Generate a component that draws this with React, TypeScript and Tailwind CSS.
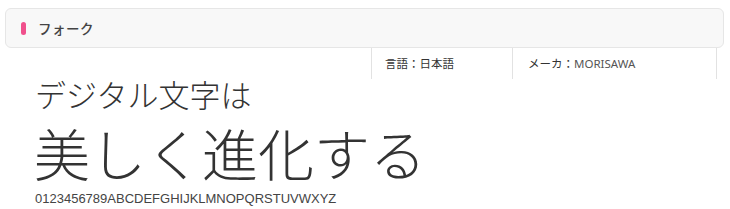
import React from 'react';

const jp = '[font-family:"Noto_Sans_CJK_JP","Noto_Sans",sans-serif]';

export default function App() {
  return (
    <div className={`w-[730px] h-[209px] bg-white overflow-hidden ${jp}`}>
      {/* Header */}
      <div className="pt-[8px] px-[5px] pr-[6px]">
        <div className="h-[40px] flex items-center gap-[12px] pl-[15px] bg-[#f8f8f8] border border-[#e6e6e6] rounded-[6px]">
          <span className="w-[5px] h-[13px] rounded-full bg-[#f0508c]" />
          <span className="text-[13.5px] font-medium text-[#444] tracking-[0.5px]">フォーク</span>
        </div>
      </div>

      {/* Meta row */}
      <div className="flex justify-end pr-[13px]">
        <div className="flex h-[31px] text-[11.5px] text-[#333]">
          <div className="w-[141px] border-l border-[#e2e2e2] pl-[13px] flex items-center">言語：日本語</div>
          <div className="w-[205px] border-l border-r border-[#e2e2e2] pl-[15px] flex items-center">
            メーカ：<span className="text-[#555] [font-family:'Noto_Sans','Liberation_Sans',sans-serif]">MORISAWA</span>
          </div>
        </div>
      </div>

      {/* Sample */}
      <div className="pl-[35px] -mt-[5px] text-[#333]">
        <div className="text-[31px] leading-[40px] font-light">デジタル文字は</div>
        <div className="mt-[7px] text-[56px] leading-[62px] font-light -ml-[1px]">美しく進化する</div>
        <div className="mt-[8px] text-[13px] leading-[16px] text-[#444] [font-family:'Liberation_Sans',Arial,sans-serif]">
          0123456789ABCDEFGHIJKLMNOPQRSTUVWXYZ
        </div>
      </div>
    </div>
  );
}
